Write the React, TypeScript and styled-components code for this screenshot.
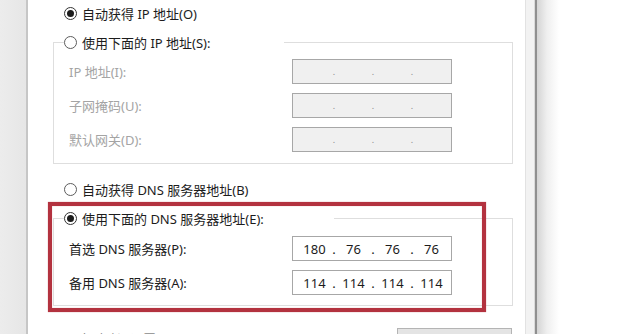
import { Fragment } from 'react';
import styled, { createGlobalStyle } from 'styled-components';

const GlobalStyle = createGlobalStyle`
  html, body {
    margin: 0;
    padding: 0;
    background: #ffffff;
  }
  body {
    font-family: 'Noto Sans', 'Noto Sans CJK SC', sans-serif;
    font-size: 13px;
    color: #1c1c1c;
  }
`;

const Screen = styled.div`
  display: flex;
  width: 632px;
  height: 334px;
  overflow: hidden;
  background: #ffffff;
`;

const Backdrop = styled.div`
  flex: 0 0 26px;
  background: linear-gradient(90deg, #ececec 0%, #e6e6e6 100%);
`;

const Dialog = styled.div`
  position: relative;
  flex: 0 0 499px;
  box-sizing: border-box;
  display: flex;
  flex-direction: column;
  padding-top: 4px;
  background: #ffffff;
  border-left: 2px solid #c6c6c6;
`;

const Frame = styled.div`
  flex: 0 0 8px;
  background: #f2f2f2;
  border-left: 1px solid #e2e2e2;
  border-right: 1px solid #dadada;
`;

const FrameEdge = styled.div`
  flex: 0 0 2px;
  background: #8f8f8f;
`;

const Shadow = styled.div`
  flex: 0 0 22px;
  background: linear-gradient(90deg, #d4d4d4 0%, #efefef 45%, #ffffff 100%);
`;

const Outside = styled.div`
  flex: 1;
  background: #ffffff;
`;

const RadioRow = styled.label<{ $top?: number }>`
  display: flex;
  align-items: center;
  gap: 5px;
  height: 20px;
  margin-left: 36px;
  margin-top: ${(p) => p.$top ?? 0}px;
  white-space: nowrap;
`;

const RadioDot = styled.span<{ $checked?: boolean }>`
  display: inline-flex;
  align-items: center;
  justify-content: center;
  width: 13px;
  height: 13px;
  box-sizing: border-box;
  border-radius: 50%;
  border: 1px solid ${(p) => (p.$checked ? '#333333' : '#5c5c5c')};
  background: #ffffff;

  &::after {
    content: '';
    display: ${(p) => (p.$checked ? 'block' : 'none')};
    width: 7px;
    height: 7px;
    border-radius: 50%;
    background: #1c1c1c;
  }
`;

const Group = styled.div<{ $top: number; $bottom: number }>`
  margin: ${(p) => p.$top}px 0 0 25px;
  width: 460px;
  box-sizing: border-box;
  border: 1px solid #dedede;
  padding-bottom: ${(p) => p.$bottom}px;
`;

const Legend = styled.label<{ $width: number }>`
  display: flex;
  align-items: center;
  gap: 5px;
  width: ${(p) => p.$width}px;
  height: 20px;
  margin: -11px 0 0 10px;
  background: #ffffff;
  white-space: nowrap;
`;

const FieldGrid = styled.div<{ $top: number }>`
  display: grid;
  grid-template-columns: 223px 160px;
  row-gap: 9px;
  align-items: center;
  margin-top: ${(p) => p.$top}px;
  padding-left: 15px;
`;

const FieldLabel = styled.span<{ $disabled?: boolean }>`
  color: ${(p) => (p.$disabled ? '#a4a4a4' : '#1c1c1c')};
  white-space: nowrap;
`;

const IpBox = styled.div<{ $disabled?: boolean }>`
  display: flex;
  align-items: center;
  width: 160px;
  height: 25px;
  box-sizing: border-box;
  padding-left: 6px;
  border: 1px solid #a7a7a7;
  background: ${(p) => (p.$disabled ? '#f0f0f0' : '#ffffff')};
  color: #1c1c1c;
`;

const Octet = styled.span`
  width: 31px;
  text-align: center;
`;

const Dot = styled.span<{ $disabled?: boolean }>`
  width: 8px;
  text-align: center;
  color: ${(p) => (p.$disabled ? '#8c8c8c' : '#1c1c1c')};
  font-size: ${(p) => (p.$disabled ? '9px' : '13px')};
`;

const Footer = styled.div`
  display: flex;
  align-items: flex-start;
  justify-content: space-between;
  margin: 23px 13px 0 37px;
`;

const FooterText = styled.span`
  height: 20px;
  line-height: 20px;
  color: #8a8a8a;
  white-space: nowrap;
`;

const Button = styled.button`
  width: 115px;
  height: 23px;
  margin-top: -1px;
  box-sizing: border-box;
  border: 1px solid #b4b4b4;
  background: #e4e4e4;
  font: inherit;
  color: #1c1c1c;
`;

const Highlight = styled.div`
  position: absolute;
  left: 20px;
  top: 202px;
  width: 438px;
  height: 110px;
  box-sizing: border-box;
  border: 4px solid #b3323f;
  box-shadow: 0 0 1px rgba(179, 50, 63, 0.6), inset 0 0 1px rgba(179, 50, 63, 0.6);
  pointer-events: none;
`;

interface IpFieldProps {
  octets?: string[];
  disabled?: boolean;
}

function IpField({ octets = ['', '', '', ''], disabled }: IpFieldProps) {
  return (
    <IpBox $disabled={disabled}>
      {octets.map((o, i) => (
        <Fragment key={i}>
          <Octet>{o}</Octet>
          {i < 3 && <Dot $disabled={disabled}>.</Dot>}
        </Fragment>
      ))}
    </IpBox>
  );
}

export default function App() {
  return (
    <>
      <GlobalStyle />
      <Screen>
        <Backdrop />
        <Dialog>
          <RadioRow>
            <RadioDot $checked />
            自动获得 IP 地址(O)
          </RadioRow>

          <Group $top={19} $bottom={11}>
            <Legend $width={220}>
              <RadioDot />
              使用下面的 IP 地址(S):
            </Legend>
            <FieldGrid $top={7}>
              <FieldLabel $disabled>IP 地址(I):</FieldLabel>
              <IpField disabled />
              <FieldLabel $disabled>子网掩码(U):</FieldLabel>
              <IpField disabled />
              <FieldLabel $disabled>默认网关(D):</FieldLabel>
              <IpField disabled />
            </FieldGrid>
          </Group>

          <RadioRow $top={16}>
            <RadioDot />
            自动获得 DNS 服务器地址(B)
          </RadioRow>

          <Group $top={19} $bottom={10}>
            <Legend $width={270}>
              <RadioDot $checked />
              使用下面的 DNS 服务器地址(E):
            </Legend>
            <FieldGrid $top={8}>
              <FieldLabel>首选 DNS 服务器(P):</FieldLabel>
              <IpField octets={['180', '76', '76', '76']} />
              <FieldLabel>备用 DNS 服务器(A):</FieldLabel>
              <IpField octets={['114', '114', '114', '114']} />
            </FieldGrid>
          </Group>

          <Footer>
            <FooterText>退出时验证设置(L)</FooterText>
            <Button>高级(V)...</Button>
          </Footer>

          <Highlight />
        </Dialog>
        <Frame />
        <FrameEdge />
        <Shadow />
        <Outside />
      </Screen>
    </>
  );
}
